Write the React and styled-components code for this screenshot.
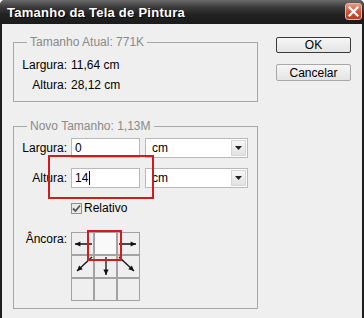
import React from 'react';
import styled, { createGlobalStyle } from 'styled-components';

const GlobalStyle = createGlobalStyle`
  html, body {
    margin: 0;
    padding: 0;
    background: #ffffff;
  }
  body {
    font-family: "Liberation Sans", Arial, sans-serif;
    font-size: 12px;
    color: #000;
  }
`;

const Window = styled.div`
  width: 364px;
  height: 318px;
  display: flex;
  flex-direction: column;
  box-sizing: border-box;
  border-radius: 5px 5px 0 0;
  overflow: hidden;
  background: #1e1e1e;
`;

const TitleBar = styled.div`
  height: 24px;
  flex: none;
  display: flex;
  align-items: center;
  justify-content: space-between;
  padding: 0 2px 0 7px;
  background: linear-gradient(#6a6a6a 0%, #3a3a3a 30%, #222 60%, #1b1b1b 100%);
`;

const Title = styled.span`
  font-family: "Liberation Sans", Arial, sans-serif;
  font-weight: bold;
  font-size: 13px;
  color: #fff;
  letter-spacing: 0.25px;
  text-shadow: 1px 1px 0 #000;
`;

const CloseButton = styled.div`
  width: 17px;
  height: 17px;
  border-radius: 3px;
  border: 1px solid #e9b2a6;
  box-sizing: border-box;
  background: linear-gradient(#e69a86, #c9533c 55%, #b83c26);
  display: flex;
  align-items: center;
  justify-content: center;
  margin-top: -1px;
`;

const Body = styled.div`
  flex: 1;
  display: flex;
  align-items: flex-start;
  gap: 18px;
  margin: 0 2px;
  padding: 11px 11px 0 11px;
  background: #efefef;
`;

const Column = styled.div`
  display: flex;
  flex-direction: column;
  gap: 17px;
  width: 245px;
`;

const Group = styled.fieldset`
  position: relative;
  margin: 0;
  padding: ${(p) => p.$pad};
  border: 1px solid #a7a7a7;
  min-width: 0;
`;

const Legend = styled.legend`
  margin-left: 13px;
  padding: 0 3px;
  line-height: 14px;
  color: #8a8a8a;
`;

const FormGrid = styled.div`
  display: grid;
  grid-template-columns: 53px 1fr;
  column-gap: 4px;
  row-gap: ${(p) => p.$gap}px;
  align-items: center;
`;

const Label = styled.span`
  text-align: right;
  line-height: ${(p) => p.$lh || 20}px;
  align-self: ${(p) => (p.$top ? 'start' : 'center')};
  margin-top: ${(p) => p.$mt || 0}px;
`;

const Value = styled.span`
  line-height: 20px;
`;

const FieldRow = styled.div`
  display: flex;
  gap: 5px;
`;

const TextBox = styled.div`
  width: 69px;
  height: 20px;
  box-sizing: border-box;
  border: 1px solid #b9b9b9;
  background: #fff;
  padding: 0 3px;
  line-height: 18px;
  display: flex;
  align-items: center;
`;

const Caret = styled.span`
  display: inline-block;
  width: 1px;
  height: 14px;
  margin-left: 1px;
  background: #000;
`;

const Select = styled.div`
  width: 103px;
  height: 20px;
  box-sizing: border-box;
  border: 1px solid #b9b9b9;
  background: #fff;
  padding: 0 1px 0 6px;
  display: flex;
  align-items: center;
  justify-content: space-between;
`;

const DropButton = styled.span`
  width: 15px;
  height: 16px;
  box-sizing: border-box;
  border: 1px solid #d6d6d6;
  background: linear-gradient(#f7f7f7, #e2e2e2);
  display: flex;
  align-items: center;
  justify-content: center;
`;

const CheckRow = styled.label`
  display: flex;
  align-items: center;
  gap: 2px;
  line-height: 16px;
  margin-top: 2px;
`;

const CheckBox = styled.span`
  width: 11px;
  height: 11px;
  box-sizing: border-box;
  border: 1px solid #8f8f8f;
  background: #e8e8e8;
  display: flex;
  align-items: center;
  justify-content: center;
`;

const AnchorGrid = styled.div`
  position: relative;
  display: grid;
  grid-template-columns: repeat(3, 21px);
  grid-template-rows: repeat(3, 21px);
  gap: 2px;
  padding: 1px;
  width: max-content;
  margin-top: 6px;
  background: #a3a3a3;
`;

const Cell = styled.div`
  background: ${(p) => (p.$active ? '#f9f9f9' : '#efefef')};
  display: flex;
  align-items: center;
  justify-content: center;
`;

const Highlight = styled.div`
  position: absolute;
  left: ${(p) => p.$x}px;
  top: ${(p) => p.$y}px;
  width: ${(p) => p.$w}px;
  height: ${(p) => p.$h}px;
  box-sizing: border-box;
  border: 2px solid #cf1c1c;
  pointer-events: none;
`;

const Buttons = styled.div`
  display: flex;
  flex-direction: column;
  gap: 11px;
  margin-top: 2px;
`;

const Button = styled.button`
  width: 75px;
  height: ${(p) => (p.$default ? 16 : 17)}px;
  box-sizing: border-box;
  padding: 0;
  font-family: "Liberation Sans", Arial, sans-serif;
  font-size: 12px;
  color: #000;
  border-radius: 2px;
  border: 1px solid ${(p) => (p.$default ? '#3a3a3a' : '#a8a8a8')};
  background: linear-gradient(#f6f6f6, #e4e4e4);
  line-height: 14px;
`;

function Arrow({ dir }) {
  const lines = {
    left: { x1: 20, y1: 11, x2: 3, y2: 11 },
    right: { x1: 1, y1: 11, x2: 18, y2: 11 },
    downLeft: { x1: 20, y1: 1, x2: 5, y2: 15 },
    down: { x1: 11, y1: 1, x2: 11, y2: 19 },
    downRight: { x1: 1, y1: 1, x2: 16, y2: 15 },
  }[dir];
  const angle = Math.atan2(lines.y2 - lines.y1, lines.x2 - lines.x1);
  const len = 6;
  const spread = 0.45;
  const p1 = [lines.x2 - len * Math.cos(angle - spread), lines.y2 - len * Math.sin(angle - spread)];
  const p2 = [lines.x2 - len * Math.cos(angle + spread), lines.y2 - len * Math.sin(angle + spread)];
  return (
    <svg width="21" height="21" viewBox="0 0 21 21">
      <line {...lines} stroke="#111" strokeWidth="1.3" />
      <polygon points={`${lines.x2},${lines.y2} ${p1[0]},${p1[1]} ${p2[0]},${p2[1]}`} fill="#111" />
    </svg>
  );
}

function DropArrow() {
  return (
    <DropButton>
      <svg width="7" height="4" viewBox="0 0 7 4"><path d="M0 0 H7 L3.5 4 Z" fill="#222" /></svg>
    </DropButton>
  );
}

export default function App() {
  return (
    <>
      <GlobalStyle />
      <Window>
        <TitleBar>
          <Title>Tamanho da Tela de Pintura</Title>
          <CloseButton>
            <svg width="11" height="11" viewBox="0 0 11 11">
              <path d="M1.5 1.5 L9.5 9.5 M9.5 1.5 L1.5 9.5" stroke="#fff" strokeWidth="2.2" strokeLinecap="square" />
            </svg>
          </CloseButton>
        </TitleBar>
        <Body>
          <Column>
            <Group $pad="6px 0 6px 0">
              <Legend>Tamanho Atual: 771K</Legend>
              <FormGrid $gap={0}>
                <Label>Largura:</Label>
                <Value>11,64 cm</Value>
                <Label>Altura:</Label>
                <Value>28,12 cm</Value>
              </FormGrid>
            </Group>
            <Group $pad="5px 0 7px 0">
              <Legend>Novo Tamanho: 1,13M</Legend>
              <FormGrid $gap={10}>
                <Label>Largura:</Label>
                <FieldRow>
                  <TextBox>0</TextBox>
                  <Select>
                    cm
                    <DropArrow />
                  </Select>
                </FieldRow>
                <Label>Altura:</Label>
                <FieldRow>
                  <TextBox>14<Caret /></TextBox>
                  <Select>
                    cm
                    <DropArrow />
                  </Select>
                </FieldRow>
                <span />
                <CheckRow>
                  <CheckBox>
                    <svg width="9" height="9" viewBox="0 0 9 9">
                      <path d="M1 4.5 L3.5 7 L8 1.5" stroke="#555" strokeWidth="1.8" fill="none" />
                    </svg>
                  </CheckBox>
                  Relativo
                </CheckRow>
                <Label $top $lh={14} $mt={6}>Âncora:</Label>
                <AnchorGrid>
                  <Cell><Arrow dir="left" /></Cell>
                  <Cell $active />
                  <Cell><Arrow dir="right" /></Cell>
                  <Cell><Arrow dir="downLeft" /></Cell>
                  <Cell><Arrow dir="down" /></Cell>
                  <Cell><Arrow dir="downRight" /></Cell>
                  <Cell />
                  <Cell />
                  <Cell />
                  <Highlight $x={16} $y={-2} $w={35} $h={31} />
                </AnchorGrid>
              </FormGrid>
              <Highlight $x={34} $y={22} $w={106} $h={44} />
            </Group>
          </Column>
          <Buttons>
            <Button $default>OK</Button>
            <Button>Cancelar</Button>
          </Buttons>
        </Body>
      </Window>
    </>
  );
}
